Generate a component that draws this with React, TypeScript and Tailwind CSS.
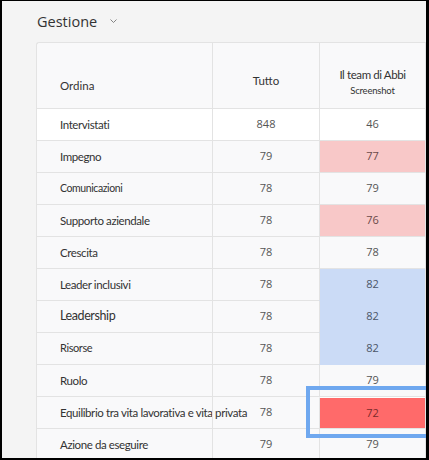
import React from 'react';

type Tone = 'pink' | 'blue' | 'red' | undefined;

interface Row {
  label: string;
  all: string;
  team: string;
  tone?: Tone;
  labelSize?: string;
}

const rows: Row[] = [
  { label: 'Intervistati', all: '848', team: '46' },
  { label: 'Impegno', all: '79', team: '77', tone: 'pink' },
  { label: 'Comunicazioni', all: '78', team: '79', labelSize: 'text-[10.5px]' },
  { label: 'Supporto aziendale', all: '78', team: '76', tone: 'pink' },
  { label: 'Crescita', all: '78', team: '78' },
  { label: 'Leader inclusivi', all: '78', team: '82', tone: 'blue' },
  { label: 'Leadership', all: '78', team: '82', tone: 'blue', labelSize: 'text-[12.5px]' },
  { label: 'Risorse', all: '78', team: '82', tone: 'blue', labelSize: 'text-[11px]' },
  { label: 'Ruolo', all: '78', team: '79' },
  { label: 'Equilibrio tra vita lavorativa e vita privata', all: '78', team: '72', tone: 'red' },
  { label: 'Azione da eseguire', all: '79', team: '79' },
];

const toneClass = (tone: Tone) => {
  if (tone === 'pink') return 'bg-[#f8c8c8] text-[#6b4a4a]';
  if (tone === 'blue') return 'bg-[#cbdbf6] border-b-[#cbdbf6] text-[#4a5568]';
  if (tone === 'red') return 'bg-[#ff6a6a] text-[#7a2a2a] border-t border-t-white';
  return 'text-[#555]';
};

export default function App() {
  return (
    <div
      className="w-[429px] h-[460px] overflow-hidden bg-[#f4f4f4] border-l-2 border-t border-r-[3px] border-b-2 border-black"
      style={{ fontFamily: '"Open Sans", "Noto Sans", sans-serif' }}
    >
      <div className="flex items-center gap-[13px] pl-[35px] pt-[2px] h-[41px]">
        <span className="text-[14.5px] text-[#333] leading-none">Gestione</span>
        <svg width="7" height="4" viewBox="0 0 7 4" className="mt-[-4px]">
          <path d="M0.5 0.5l3 3 3-3" fill="none" stroke="#777" strokeWidth="0.9" />
        </svg>
      </div>

      <div className="relative ml-[34px]">
        <div className="grid grid-cols-[175px_107px_106px_40px] bg-[#f9f9fa] border-l border-t border-[#e3e3e3] rounded-tl-[3px]">
          {/* header */}
          <div
            className="h-[66px] flex items-end pb-[14px] pl-[23px] text-[11.5px] text-[#333] border-b border-[#e3e3e3]"
            style={{ fontFamily: 'Lato, sans-serif' }}
          >
            Ordina
          </div>
          <div
            className="h-[66px] flex items-end justify-center pb-[19px] text-[11.5px] text-[#333] border-l border-b border-[#e3e3e3]"
            style={{ fontFamily: 'Lato, sans-serif' }}
          >
            Tutto
          </div>
          <div
            className="h-[66px] flex flex-col items-center justify-end pb-[9px] text-[#333] border-l border-b border-[#e3e3e3]"
            style={{ fontFamily: 'Lato, sans-serif' }}
          >
            <span className="text-[11.5px] leading-[16px] tracking-[-0.4px]">Il team di Abbi</span>
            <span className="text-[9.5px] leading-[16px] tracking-[-0.2px]">Screenshot</span>
          </div>
          <div className="h-[66px] border-l border-b border-[#e3e3e3]" />

          {rows.map((r, i) => {
            const bg = i === 0 ? 'bg-white' : '';
            return (
              <React.Fragment key={r.label}>
                <div
                  className={`h-[32px] flex items-center pl-[23px] whitespace-nowrap tracking-[-0.4px] ${r.labelSize ?? 'text-[11.5px]'} text-[#333] border-b border-[#e3e3e3] ${bg}`}
                  style={{ fontFamily: 'Lato, sans-serif' }}
                >
                  {r.label}
                </div>
                <div
                  className={`h-[32px] flex items-center justify-center text-[11px] text-[#555] border-l border-b border-[#e3e3e3] ${bg}`}
                >
                  {r.all}
                </div>
                <div
                  className={`h-[32px] flex items-center justify-center text-[11px] border-l border-b border-[#e3e3e3] ${bg} ${toneClass(r.tone)}`}
                >
                  {r.team}
                </div>
                <div className={`h-[32px] border-l border-b border-[#e3e3e3] ${bg}`} />
              </React.Fragment>
            );
          })}
        </div>

        {/* focus outline over the highlighted cell */}
        <div className="absolute left-[270px] top-[344px] w-[130px] h-[52px] border-4 border-[#6fa8ef]" />
      </div>
    </div>
  );
}
